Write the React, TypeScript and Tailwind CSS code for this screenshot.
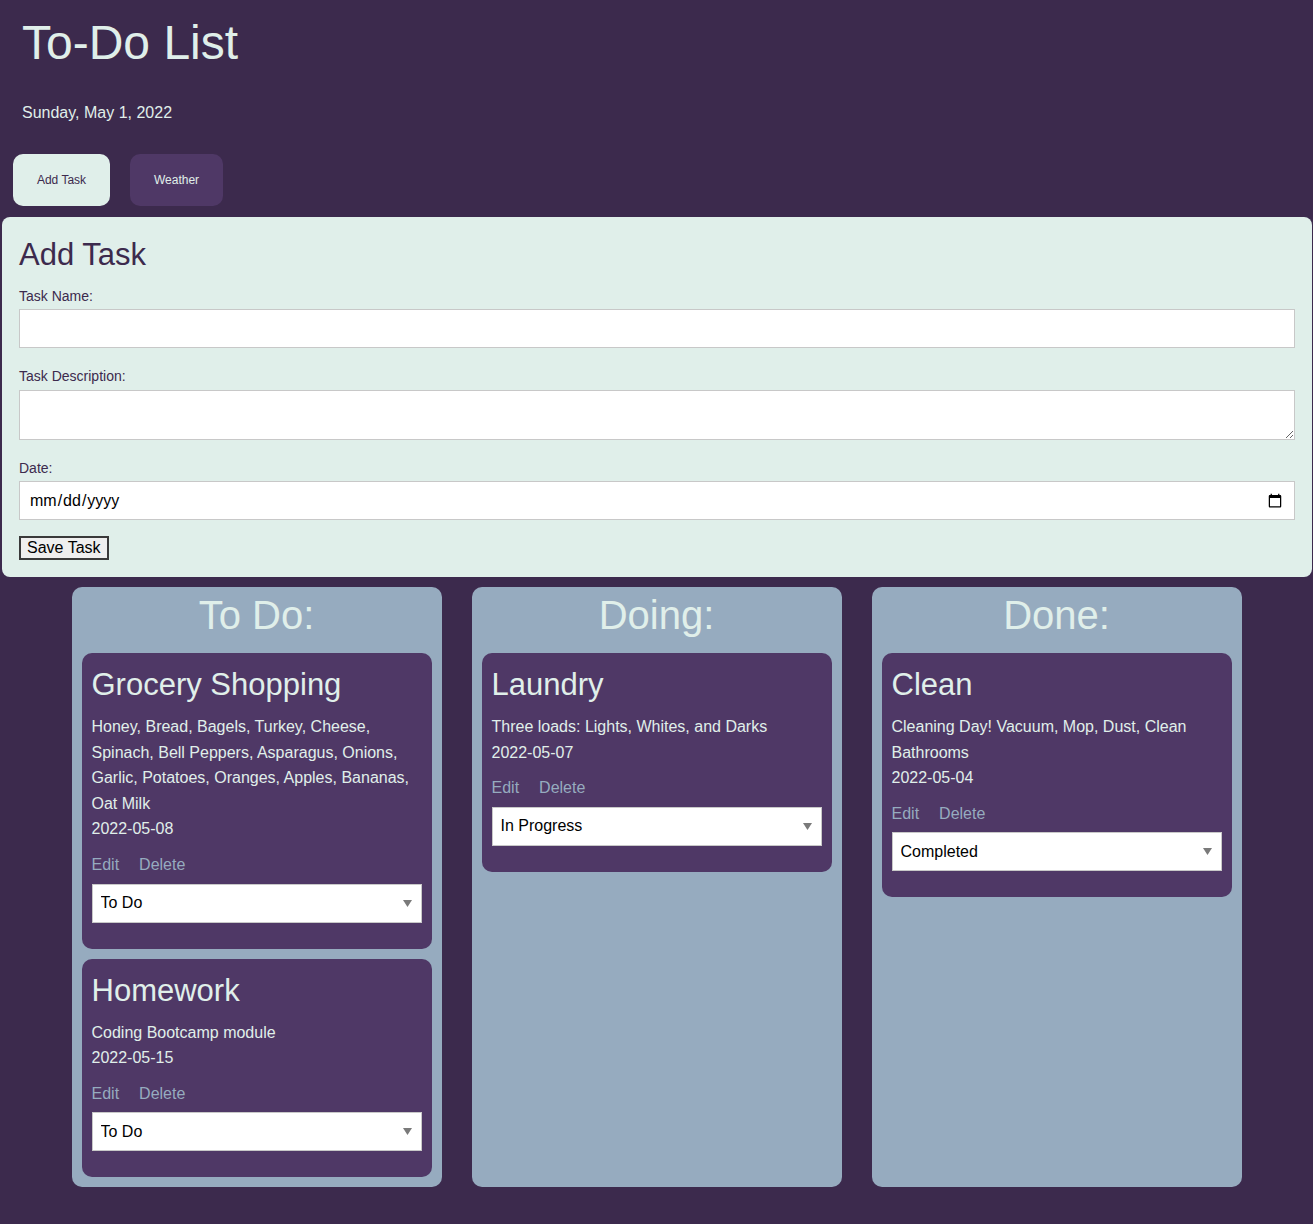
import { useState } from "react";

interface Task {
  id: number;
  name: string;
  description: string;
  date: string;
  status: string;
}

const tasks: Task[] = [
  {
    id: 1,
    name: "Grocery Shopping",
    description:
      "Honey, Bread, Bagels, Turkey, Cheese, Spinach, Bell Peppers, Asparagus, Onions, Garlic, Potatoes, Oranges, Apples, Bananas, Oat Milk",
    date: "2022-05-08",
    status: "todo",
  },
  {
    id: 2,
    name: "Homework",
    description: "Coding Bootcamp module",
    date: "2022-05-15",
    status: "todo",
  },
  {
    id: 3,
    name: "Laundry",
    description: "Three loads: Lights, Whites, and Darks",
    date: "2022-05-07",
    status: "doing",
  },
  {
    id: 4,
    name: "Clean",
    description: "Cleaning Day! Vacuum, Mop, Dust, Clean Bathrooms",
    date: "2022-05-04",
    status: "done",
  },
];

const columns = [
  { key: "todo", title: "To Do:" },
  { key: "doing", title: "Doing:" },
  { key: "done", title: "Done:" },
];

const TaskCard = ({ task }: { task: Task }) => {
  const [status, setStatus] = useState(task.status);

  return (
    <div className="bg-[#4f3866] rounded-[10px] px-[10px] pt-[14px] pb-[26px] text-[#e0efea]">
      <h3 className="text-[31px] leading-[36px]">{task.name}</h3>
      <div className="mt-[11px] text-[16px] leading-[25.6px]">
        <p>{task.description}</p>
        <p>{task.date}</p>
      </div>
      <div className="mt-[10px] flex gap-[20px] text-[16px] leading-[25.6px] text-[#96abbf]">
        <button className="cursor-pointer">Edit</button>
        <button className="cursor-pointer">Delete</button>
      </div>
      <div className="relative mt-[6px]">
        <select
          value={status}
          onChange={(e) => setStatus(e.target.value)}
          className="appearance-none w-full h-[39px] bg-white border border-[#c8c8c8] pl-[8px] text-[16px] text-black outline-none"
        >
          <option value="todo">To Do</option>
          <option value="doing">In Progress</option>
          <option value="done">Completed</option>
        </select>
        <svg
          className="absolute right-[10px] top-[16px] pointer-events-none"
          width="9"
          height="7"
          viewBox="0 0 9 7"
        >
          <path d="M0 0 H9 L4.5 7 Z" fill="#7a7a7a" />
        </svg>
      </div>
    </div>
  );
};

const App = () => {
  return (
    <div className="min-h-[1224px] bg-[#3c2a4d] font-['Liberation_Sans',Arial,sans-serif] pb-[37px]">
      <header className="pt-[15px]">
        <h1 className="pl-[22px] text-[48px] leading-[55px] text-[#e0efea]">To-Do List</h1>
        <p className="pl-[22px] mt-[34px] text-[16px] leading-[18px] text-[#e0efea]">
          Sunday, May 1, 2022
        </p>
        <div className="flex gap-[20px] pl-[13px] mt-[32px]">
          <button className="w-[97px] h-[52px] rounded-[10px] bg-[#e0efea] text-[12px] text-[#3c2a4d]">
            Add Task
          </button>
          <button className="w-[93px] h-[52px] rounded-[10px] bg-[#4f3866] text-[12px] text-[#e0efea]">
            Weather
          </button>
        </div>
      </header>

      <form className="ml-[2px] mr-[1px] mt-[11px] rounded-[8px] bg-[#e0efea] px-[17px] pt-[21px] pb-[17px] text-[#3c2a4d]">
        <h2 className="text-[31px] leading-[34px]">Add Task</h2>
        <label className="block mt-[16px] text-[14px] leading-[16px]">Task Name:</label>
        <input
          type="text"
          className="block w-full h-[39px] mt-[5px] bg-white border border-[#c8c8c8] outline-none"
        />
        <label className="block mt-[20px] text-[14px] leading-[16px]">Task Description:</label>
        <textarea className="block w-full h-[50px] mt-[6px] bg-white border border-[#c8c8c8] outline-none" />
        <label className="block mt-[20px] text-[14px] leading-[16px]">Date:</label>
        <input
          type="date"
          className="block w-full h-[39px] mt-[5px] bg-white border border-[#c8c8c8] px-[9px] text-[16px] text-black outline-none"
        />
        <button
          type="button"
          className="mt-[16px] h-[24px] px-[6px] bg-[#efefef] border-2 border-[#3a3a3a] text-[16px] leading-[18px] text-black"
        >
          Save Task
        </button>
      </form>

      <main className="flex justify-center gap-[30px] mt-[10px]">
        {columns.map((col) => (
          <section
            key={col.key}
            className="w-[370px] bg-[#96abbf] rounded-[10px] px-[10px] pt-[5px] pb-[10px] min-h-[600px]"
          >
            <h2 className="text-center text-[40px] leading-[46px] text-[#e0efea] mb-[15px]">
              {col.title}
            </h2>
            <div className="flex flex-col gap-[10px]">
              {tasks
                .filter((t) => t.status === col.key)
                .map((t) => (
                  <TaskCard key={t.id} task={t} />
                ))}
            </div>
          </section>
        ))}
      </main>
    </div>
  );
};

export default App;
